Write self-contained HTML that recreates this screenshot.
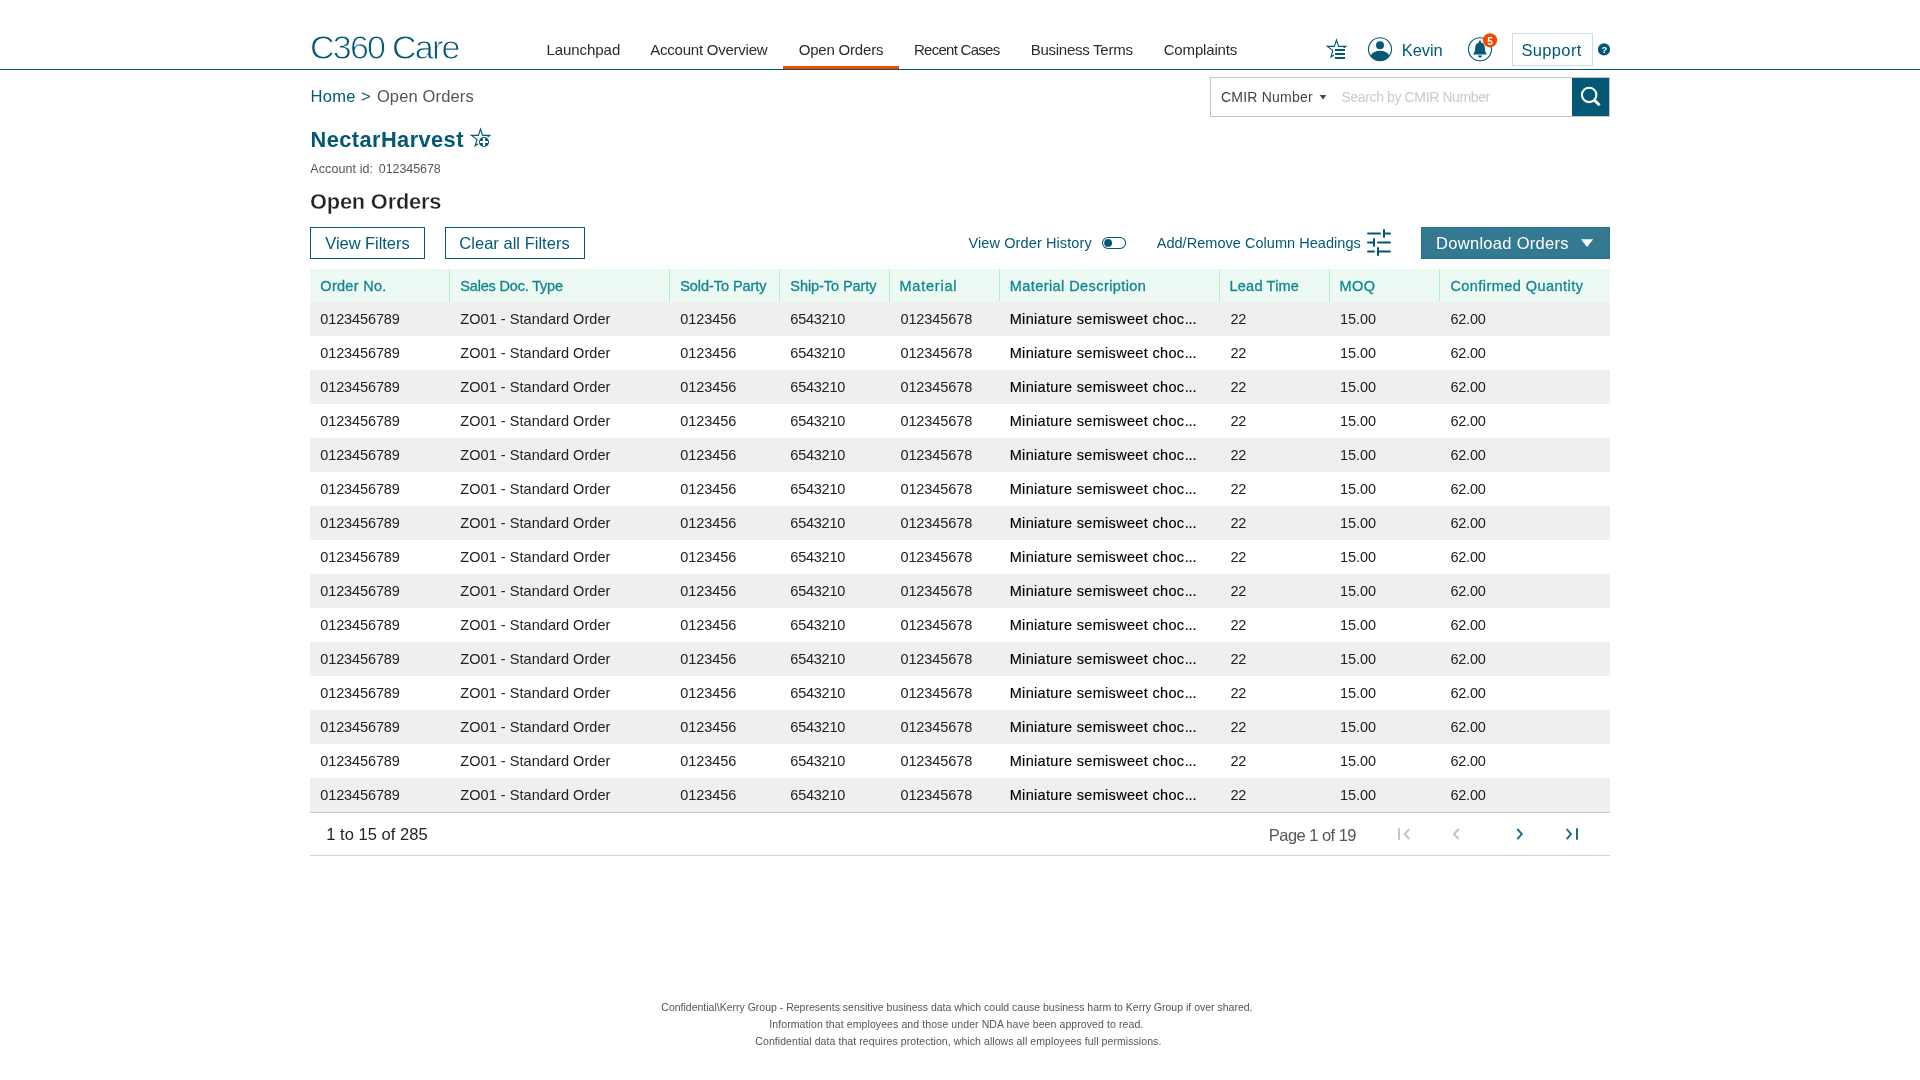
<!DOCTYPE html>
<html lang="en"><head><meta charset="utf-8"><title>C360 Care - Open Orders</title>
<style>
*{box-sizing:border-box;margin:0;padding:0}
html,body{width:1920px;height:1080px;overflow:hidden;background:#fff}
body{position:relative;font-family:"Liberation Sans",sans-serif;color:#222}
#app{position:absolute;left:0;top:0;width:1920px;height:1080px;will-change:transform}
.a{position:absolute}
.t{position:absolute;white-space:pre;line-height:1;font-family:"Liberation Sans",sans-serif;font-weight:400;text-decoration:none}
svg{position:absolute;overflow:visible}
.rule{left:0;top:69px;width:1920px;height:1px;background:#025875}
.active-bar{left:783px;top:66px;width:116px;height:3px;background:#f24800}
.btn-outline{border:1px solid #025875}
.grid{position:absolute;left:310px;top:269px;width:1300px}
.thead{position:absolute;left:0;top:0;width:1300px;height:33px;background:#ecfaf3}
.thead i{position:absolute;top:0;width:1px;height:33px;background:#b4ecd6}
.row{position:absolute;left:0;width:1300px;height:34px}
.row.odd{background:#efefef}
.pager{position:absolute;left:0;top:543px;width:1300px;height:44px;border-top:1px solid #c9c9c9;border-bottom:1px solid #d4d4d4}
.h0{left:10.3px;top:10px;font-size:14.5px;color:#12868f;letter-spacing:0.3px;-webkit-text-stroke:0.3px #12868f;}
.h1{left:150.3px;top:10px;font-size:14.5px;color:#12868f;letter-spacing:-0.186px;-webkit-text-stroke:0.3px #12868f;}
.h2{left:370.25px;top:10px;font-size:14.5px;color:#12868f;letter-spacing:-0.058px;-webkit-text-stroke:0.3px #12868f;}
.h3{left:480.3px;top:10px;font-size:14.5px;color:#12868f;letter-spacing:-0.066px;-webkit-text-stroke:0.3px #12868f;}
.h4{left:589.4px;top:10px;font-size:14.5px;color:#12868f;letter-spacing:0.8px;-webkit-text-stroke:0.3px #12868f;}
.h5{left:699.8px;top:10px;font-size:14.5px;color:#12868f;letter-spacing:0.421px;-webkit-text-stroke:0.3px #12868f;}
.h6{left:919.6px;top:10px;font-size:14.5px;color:#12868f;letter-spacing:0.2px;-webkit-text-stroke:0.3px #12868f;}
.h7{left:1029.5px;top:10px;font-size:14.5px;color:#12868f;letter-spacing:0.4px;-webkit-text-stroke:0.3px #12868f;}
.h8{left:1140.4px;top:10px;font-size:14.5px;color:#12868f;letter-spacing:0.447px;-webkit-text-stroke:0.3px #12868f;}
.c0{left:10.25px;top:10px;font-size:14.5px;color:#222;letter-spacing:-0.112px;}
.c1{left:150.3px;top:10px;font-size:14.5px;color:#222;letter-spacing:0.05px;}
.c2{left:370.25px;top:10px;font-size:14.5px;color:#222;letter-spacing:-0.05px;}
.c3{left:480.3px;top:10px;font-size:14.5px;color:#222;letter-spacing:-0.234px;}
.c4{left:590.4px;top:10px;font-size:14.5px;color:#222;letter-spacing:-0.075px;}
.c5{left:699.7px;top:10px;font-size:14.5px;color:#000;letter-spacing:0.33px;-webkit-text-stroke:0.15px #000;}
.c6{left:874.7px;top:10px;font-size:14.5px;color:#000;letter-spacing:-0.1px;-webkit-text-stroke:0.15px #000;}
.c7{left:920.6px;top:10px;font-size:14.5px;color:#222;letter-spacing:-0.4px;}
.c8{left:1030.0px;top:10px;font-size:14.5px;color:#222;letter-spacing:-0.05px;}
.c9{left:1140.4px;top:10px;font-size:14.5px;color:#222;letter-spacing:-0.2px;}
</style></head>
<body>
<div id="app">
<header>
<a class="t logo" style="left:309.9px;top:30px;font-size:34px;color:#025875;letter-spacing:-1.725px;-webkit-text-stroke:0.8px #fff;">C360 Care</a>
<nav>
<a class="t" style="left:546.5px;top:42px;font-size:15px;color:#2b2b2b;letter-spacing:-0.062px;">Launchpad</a>
<a class="t" style="left:650.25px;top:42px;font-size:15px;color:#2b2b2b;letter-spacing:-0.233px;">Account Overview</a>
<a class="t" style="left:798.75px;top:42px;font-size:15px;color:#2b2b2b;letter-spacing:-0.2px;">Open Orders</a>
<a class="t" style="left:914.0px;top:42px;font-size:15px;color:#2b2b2b;letter-spacing:-0.727px;">Recent Cases</a>
<a class="t" style="left:1030.7px;top:42px;font-size:15px;color:#2b2b2b;letter-spacing:-0.261px;">Business Terms</a>
<a class="t" style="left:1163.7px;top:42px;font-size:15px;color:#2b2b2b;letter-spacing:-0.155px;">Complaints</a>
<div class="a active-bar"></div>
</nav>
<div class="user-tools">
<svg class="a" style="left:0;top:0" width="1920" height="1080" viewBox="0 0 1920 1080" fill="none">
<!-- favourites list (star + bars) -->
  <path d="M1343.9 47.7 L1345.7 46.4 L1338.6 46.4 L1336.5 40.1 L1334.3 46.4 L1327.3 46.4 L1332.8 50.4 L1331.0 56.9 L1333.6 55.2" stroke="#025875" stroke-width="1.15" stroke-linejoin="miter" stroke-linecap="round"/>
  <rect x="1335" y="49" width="10" height="2" fill="#025875"/>
  <rect x="1335" y="53" width="10" height="2" fill="#025875"/>
  <rect x="1335" y="57" width="10" height="2" fill="#025875"/>
  <!-- user -->
  <circle cx="1380" cy="49.2" r="11.5" stroke="#025875" stroke-width="1.1"/>
  <circle cx="1380" cy="45.3" r="4" fill="#025875"/>
  <path d="M1370.52 55.71 A10.5 8.8 0 0 1 1389.48 55.71 A11.5 11.5 0 0 1 1370.52 55.71 Z" fill="#025875"/>
  <!-- bell -->
  <circle cx="1480" cy="49.2" r="11.5" stroke="#025875" stroke-width="1.1"/>
  <path d="M1479.95 40.6 a1.1 1.1 0 0 1 1.1 1.1 v0.9 C1483.6 43.3 1484.9 45.6 1484.9 48.2 C1484.9 51.2 1485.6 52.6 1487.0 54.5 L1473.0 54.5 C1474.4 52.6 1475.1 51.2 1475.1 48.2 C1475.1 45.6 1476.4 43.3 1478.85 42.6 v-0.9 a1.1 1.1 0 0 1 1.1 -1.1 Z" fill="#025875"/>
  <path d="M1478 55.4 h4.1 a2.05 2.2 0 0 1 -4.1 0 Z" fill="#025875"/>
  <circle cx="1490" cy="40.3" r="7.1" fill="#f24800"/>
  <!-- help -->
  <circle cx="1604" cy="49.4" r="6.1" fill="#025875"/>
</svg>
<span class="t" style="left:1487.2px;top:37.1px;font-size:10.2px;font-weight:700;color:#fff">5</span>
<span class="t" style="left:1601.4px;top:44.9px;font-size:9.5px;font-weight:700;color:#fff">?</span>
<span class="t" style="left:1401.75px;top:42px;font-size:16.5px;color:#025875;letter-spacing:-0.076px;">Kevin</span>
<div class="a btn-support" style="left:1512px;top:33px;width:81px;height:33px;border:1px solid #ccdde4"></div>
<span class="t" style="left:1521.5px;top:42px;font-size:16.5px;color:#025875;letter-spacing:0.334px;">Support</span>
</div>
<div class="a rule"></div>
</header>
<main>
<div class="breadcrumb">
<a class="t" style="left:310.5px;top:88px;font-size:16.5px;color:#025875;letter-spacing:0.333px;">Home</a>
<span class="t" style="left:360.9px;top:88px;font-size:16.5px;color:#025875;">&gt;</span>
<span class="t" style="left:376.9px;top:88px;font-size:16.5px;color:#555;letter-spacing:0.14px;">Open Orders</span>
</div>
<div class="search">
<div class="a" style="left:1210px;top:77px;width:400px;height:40px;border:1px solid #c4c4c4;background:#fff"></div>
<div class="a" style="left:1572px;top:78px;width:37px;height:38px;background:#025875"></div>
<span class="t" style="left:1221.0px;top:90px;font-size:14px;color:#444;letter-spacing:0.22px;">CMIR Number</span>
<span class="t" style="left:1341.5px;top:90px;font-size:14px;color:#cacaca;letter-spacing:-0.38px;">Search by CMIR Number</span>
<svg class="a" style="left:0;top:0" width="1920" height="1080" viewBox="0 0 1920 1080" fill="none">
<!-- search caret -->
  <path d="M1319.7 95.1 h6.5 l-3.25 4.5 Z" fill="#444"/>
  <!-- search magnifier -->
  <circle cx="1589.15" cy="94.95" r="7.2" stroke="#fff" stroke-width="2.1"/>
  <path d="M1594.2 100.0 L1599.6 105.3" stroke="#fff" stroke-width="2.9"/>
</svg>
</div>
<section class="title">
<h1 class="t" style="left:310.6px;top:129px;font-size:21.8px;color:#025875;letter-spacing:0.417px;font-weight:700;">NectarHarvest</h1>
<svg class="a" style="left:0;top:0" width="1920" height="1080" viewBox="0 0 1920 1080" fill="none">
<!-- add-to-favourites star -->
  <path d="M487.9 136.7 L489.7 135.4 L482.6 135.4 L480.5 129.1 L478.4 135.4 L471.4 135.4 L477.0 139.4 L475.1 145.8 L477.9 144.0" stroke="#025875" stroke-width="1.15" stroke-linecap="round"/>
  <circle cx="484" cy="142" r="5.05" fill="#025875"/>
  <path d="M480 142 h8 M484 138 v8" stroke="#fff" stroke-width="2.2"/>
</svg>
<span class="t" style="left:310.25px;top:163px;font-size:12.5px;color:#555;letter-spacing:0.1px;">Account id:</span>
<span class="t" style="left:378.75px;top:163px;font-size:12.5px;color:#555;letter-spacing:-0.063px;">012345678</span>
<h2 class="t" style="left:310.0px;top:191px;font-size:21.8px;color:#222;letter-spacing:-0.18px;font-weight:700;-webkit-text-stroke:0.35px #fff;">Open Orders</h2>
</section>
<section class="toolbar">
<div class="a btn-outline" style="left:310px;top:227px;width:115px;height:32px;"></div>
<span class="t" style="left:325.3px;top:235px;font-size:16.5px;color:#025875;letter-spacing:-0.055px;">View Filters</span>
<div class="a btn-outline" style="left:445px;top:227px;width:140px;height:32px;"></div>
<span class="t" style="left:459.3px;top:235px;font-size:16.5px;color:#025875;letter-spacing:0.024px;">Clear all Filters</span>
<span class="t" style="left:968.5px;top:236px;font-size:14.5px;color:#025875;letter-spacing:0.106px;">View Order History</span>
<span class="t" style="left:1156.7px;top:236px;font-size:14.5px;color:#025875;letter-spacing:0.04px;">Add/Remove Column Headings</span>
<div class="a btn-download" style="left:1421px;top:227px;width:189px;height:32px;background:#347992;border:1px solid #29708a"></div>
<span class="t" style="left:1436.1px;top:235px;font-size:16.5px;color:#fff;letter-spacing:0.286px;">Download Orders</span>
<svg class="a" style="left:0;top:0" width="1920" height="1080" viewBox="0 0 1920 1080" fill="none">
<!-- toggle -->
  <rect x="1102.5" y="237.5" width="23.1" height="11" rx="5.5" stroke="#025875" stroke-width="1.05"/>
  <circle cx="1108.1" cy="242.9" r="3.9" fill="#025875"/>
  <!-- column sliders -->
  <path d="M1368 233.5 H1380 M1384 230 V237 M1384 233.5 H1390 M1368 242.5 H1374 M1374 239 V246 M1378 242.5 H1390 M1368 251.5 H1374 M1378 248 V255 M1378 251.5 H1390" stroke="#025875" stroke-width="2" stroke-linecap="round"/>
  <!-- download caret -->
  <path d="M1580.9 239.2 h12.3 l-6.15 7.8 Z" fill="#fff"/>
</svg>
</section>
<section class="grid">
<div class="thead"><i style="left:139px"></i><i style="left:359px"></i><i style="left:469px"></i><i style="left:579px"></i><i style="left:689px"></i><i style="left:909px"></i><i style="left:1019px"></i><i style="left:1129px"></i><span class="t h0">Order No.</span><span class="t h1">Sales Doc. Type</span><span class="t h2">Sold-To Party</span><span class="t h3">Ship-To Party</span><span class="t h4">Material</span><span class="t h5">Material Description</span><span class="t h6">Lead Time</span><span class="t h7">MOQ</span><span class="t h8">Confirmed Quantity</span></div>
<div class="row odd" style="top:33px"><span class="t c0">0123456789</span><span class="t c1">ZO01 - Standard Order</span><span class="t c2">0123456</span><span class="t c3">6543210</span><span class="t c4">012345678</span><span class="t c5">Miniature semisweet choc</span><span class="t c6">...</span><span class="t c7">22</span><span class="t c8">15.00</span><span class="t c9">62.00</span></div>
<div class="row" style="top:67px"><span class="t c0">0123456789</span><span class="t c1">ZO01 - Standard Order</span><span class="t c2">0123456</span><span class="t c3">6543210</span><span class="t c4">012345678</span><span class="t c5">Miniature semisweet choc</span><span class="t c6">...</span><span class="t c7">22</span><span class="t c8">15.00</span><span class="t c9">62.00</span></div>
<div class="row odd" style="top:101px"><span class="t c0">0123456789</span><span class="t c1">ZO01 - Standard Order</span><span class="t c2">0123456</span><span class="t c3">6543210</span><span class="t c4">012345678</span><span class="t c5">Miniature semisweet choc</span><span class="t c6">...</span><span class="t c7">22</span><span class="t c8">15.00</span><span class="t c9">62.00</span></div>
<div class="row" style="top:135px"><span class="t c0">0123456789</span><span class="t c1">ZO01 - Standard Order</span><span class="t c2">0123456</span><span class="t c3">6543210</span><span class="t c4">012345678</span><span class="t c5">Miniature semisweet choc</span><span class="t c6">...</span><span class="t c7">22</span><span class="t c8">15.00</span><span class="t c9">62.00</span></div>
<div class="row odd" style="top:169px"><span class="t c0">0123456789</span><span class="t c1">ZO01 - Standard Order</span><span class="t c2">0123456</span><span class="t c3">6543210</span><span class="t c4">012345678</span><span class="t c5">Miniature semisweet choc</span><span class="t c6">...</span><span class="t c7">22</span><span class="t c8">15.00</span><span class="t c9">62.00</span></div>
<div class="row" style="top:203px"><span class="t c0">0123456789</span><span class="t c1">ZO01 - Standard Order</span><span class="t c2">0123456</span><span class="t c3">6543210</span><span class="t c4">012345678</span><span class="t c5">Miniature semisweet choc</span><span class="t c6">...</span><span class="t c7">22</span><span class="t c8">15.00</span><span class="t c9">62.00</span></div>
<div class="row odd" style="top:237px"><span class="t c0">0123456789</span><span class="t c1">ZO01 - Standard Order</span><span class="t c2">0123456</span><span class="t c3">6543210</span><span class="t c4">012345678</span><span class="t c5">Miniature semisweet choc</span><span class="t c6">...</span><span class="t c7">22</span><span class="t c8">15.00</span><span class="t c9">62.00</span></div>
<div class="row" style="top:271px"><span class="t c0">0123456789</span><span class="t c1">ZO01 - Standard Order</span><span class="t c2">0123456</span><span class="t c3">6543210</span><span class="t c4">012345678</span><span class="t c5">Miniature semisweet choc</span><span class="t c6">...</span><span class="t c7">22</span><span class="t c8">15.00</span><span class="t c9">62.00</span></div>
<div class="row odd" style="top:305px"><span class="t c0">0123456789</span><span class="t c1">ZO01 - Standard Order</span><span class="t c2">0123456</span><span class="t c3">6543210</span><span class="t c4">012345678</span><span class="t c5">Miniature semisweet choc</span><span class="t c6">...</span><span class="t c7">22</span><span class="t c8">15.00</span><span class="t c9">62.00</span></div>
<div class="row" style="top:339px"><span class="t c0">0123456789</span><span class="t c1">ZO01 - Standard Order</span><span class="t c2">0123456</span><span class="t c3">6543210</span><span class="t c4">012345678</span><span class="t c5">Miniature semisweet choc</span><span class="t c6">...</span><span class="t c7">22</span><span class="t c8">15.00</span><span class="t c9">62.00</span></div>
<div class="row odd" style="top:373px"><span class="t c0">0123456789</span><span class="t c1">ZO01 - Standard Order</span><span class="t c2">0123456</span><span class="t c3">6543210</span><span class="t c4">012345678</span><span class="t c5">Miniature semisweet choc</span><span class="t c6">...</span><span class="t c7">22</span><span class="t c8">15.00</span><span class="t c9">62.00</span></div>
<div class="row" style="top:407px"><span class="t c0">0123456789</span><span class="t c1">ZO01 - Standard Order</span><span class="t c2">0123456</span><span class="t c3">6543210</span><span class="t c4">012345678</span><span class="t c5">Miniature semisweet choc</span><span class="t c6">...</span><span class="t c7">22</span><span class="t c8">15.00</span><span class="t c9">62.00</span></div>
<div class="row odd" style="top:441px"><span class="t c0">0123456789</span><span class="t c1">ZO01 - Standard Order</span><span class="t c2">0123456</span><span class="t c3">6543210</span><span class="t c4">012345678</span><span class="t c5">Miniature semisweet choc</span><span class="t c6">...</span><span class="t c7">22</span><span class="t c8">15.00</span><span class="t c9">62.00</span></div>
<div class="row" style="top:475px"><span class="t c0">0123456789</span><span class="t c1">ZO01 - Standard Order</span><span class="t c2">0123456</span><span class="t c3">6543210</span><span class="t c4">012345678</span><span class="t c5">Miniature semisweet choc</span><span class="t c6">...</span><span class="t c7">22</span><span class="t c8">15.00</span><span class="t c9">62.00</span></div>
<div class="row odd" style="top:509px"><span class="t c0">0123456789</span><span class="t c1">ZO01 - Standard Order</span><span class="t c2">0123456</span><span class="t c3">6543210</span><span class="t c4">012345678</span><span class="t c5">Miniature semisweet choc</span><span class="t c6">...</span><span class="t c7">22</span><span class="t c8">15.00</span><span class="t c9">62.00</span></div>
<div class="pager"></div>
</section>
<span class="t" style="left:326.25px;top:826px;font-size:16.5px;color:#222;letter-spacing:0.038px;">1 to 15 of 285</span>
<span class="t" style="left:1268.85px;top:827px;font-size:16.5px;color:#555;letter-spacing:-0.536px;">Page 1 of 19</span>
<svg class="a" style="left:0;top:0" width="1920" height="1080" viewBox="0 0 1920 1080" fill="none">
<!-- pagination arrows -->
  <path d="M1399 828.2 V839.8" stroke="#c4c4c4" stroke-width="2"/>
  <path d="M1409.2 829 L1404.8 834.1 L1409.2 839.2" stroke="#c0c0c0" stroke-width="1.9"/>
  <path d="M1458.7 829 L1454.1 834.1 L1458.7 839.2" stroke="#c0c0c0" stroke-width="1.9"/>
  <path d="M1517.3 829 L1521.8 834.1 L1517.3 839.2" stroke="#1a6a88" stroke-width="1.9"/>
  <path d="M1566.7 829 L1571.0 834.1 L1566.7 839.2" stroke="#1a6a88" stroke-width="1.9"/>
  <path d="M1577 828.2 V839.8" stroke="#1a6a88" stroke-width="2"/>
</svg>
</main>
<footer>
<p class="t" style="left:661.3px;top:1002px;font-size:10.5px;color:#555;">Confidential\Kerry Group - Represents sensitive business data which could cause business harm to Kerry Group if over shared.</p>
<p class="t" style="left:769.3px;top:1019px;font-size:10.5px;color:#555;letter-spacing:0.093px;">Information that employees and those under NDA have been approved to read.</p>
<p class="t" style="left:755.3px;top:1036px;font-size:10.5px;color:#555;letter-spacing:0.079px;">Confidential data that requires protection, which allows all employees full permissions.</p>
</footer>
</div>
</body></html>
